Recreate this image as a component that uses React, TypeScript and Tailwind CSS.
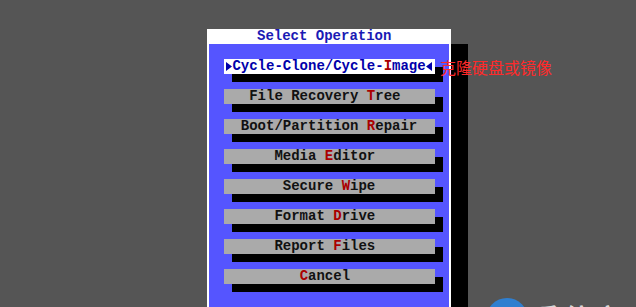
import type { ReactNode } from 'react';

const mono = { fontFamily: "'Liberation Mono', 'DejaVu Sans Mono', monospace" };

type Item = { pad: number; before: string; hot: string; after: string };

const items: Item[] = [
  { pad: 3, before: 'File Recovery ', hot: 'T', after: 'ree' },
  { pad: 2, before: 'Boot/Partition ', hot: 'R', after: 'epair' },
  { pad: 6, before: 'Media ', hot: 'E', after: 'ditor' },
  { pad: 7, before: 'Secure ', hot: 'W', after: 'ipe' },
  { pad: 6, before: 'Format ', hot: 'D', after: 'rive' },
  { pad: 6, before: 'Report ', hot: 'F', after: 'iles' },
  { pad: 9, before: '', hot: 'C', after: 'ancel' },
];

function Arrow({ dir }: { dir: 'left' | 'right' }) {
  return (
    <span className="inline-flex w-[8.4px] h-[15px] items-center justify-center">
      <svg width="7" height="9" viewBox="0 0 7 9">
        {dir === 'right'
          ? <polygon points="1,0 7,4.5 1,9" fill="#0000aa" />
          : <polygon points="6,0 0,4.5 6,9" fill="#0000aa" />}
      </svg>
    </span>
  );
}

function Button({ children, selected }: { children: ReactNode; selected?: boolean }) {
  return (
    <div
      className={`w-[211px] h-[15px] text-[14px] leading-[15px] font-bold whitespace-pre flex items-center shadow-[8px_8px_0_#000] ${
        selected ? 'bg-white text-[#0000aa]' : 'bg-[#aaaaaa] text-[#111111]'
      }`}
      style={mono}
    >
      {children}
    </div>
  );
}

export default function App() {
  return (
    <div className="relative w-[636px] h-[307px] overflow-hidden bg-[#555555]">
      {/* DOS dialog */}
      <div className="ml-[207px] mt-[29px] w-[244px] bg-white shadow-[17px_15px_0_#000]">
        <div
          className="h-[15px] pl-[50px] text-[14px] leading-[15px] font-bold text-[#1a1ab4] whitespace-pre"
          style={mono}
        >
          Select Operation
        </div>
        <div className="mx-[2px] bg-[#5555ff] pl-[15px] pt-[15px] pb-[40px] flex flex-col gap-[15px]">
          <Button selected>
            <Arrow dir="right" />
            <span>Cycle-Clone/Cycle-</span>
            <span className="text-[#aa0000]">I</span>
            <span>mage</span>
            <Arrow dir="left" />
          </Button>
          {items.map((it) => (
            <Button key={it.hot + it.after}>
              <span>{' '.repeat(it.pad) + it.before}</span>
              <span className="text-[#aa0000]">{it.hot}</span>
              <span>{it.after}</span>
            </Button>
          ))}
        </div>
      </div>

      {/* annotation */}
      <div
        className="absolute left-[440px] top-[59px] text-[16px] leading-[16px] text-[#ff2a2a]"
        style={{ fontFamily: "'Noto Sans CJK SC', sans-serif" }}
      >
        克隆硬盘或镜像
      </div>

      {/* watermark */}
      <div className="absolute left-[486px] top-[298px] flex items-start gap-[8px]">
        <div className="w-[50px] h-[50px] rounded-full bg-[#2f7fd0]" />
        <div
          className="mt-[6px] text-[24px] leading-[24px] font-bold text-[#d8d8d8] tracking-[6px]"
          style={{ fontFamily: "'Noto Sans CJK SC', sans-serif" }}
        >
          系统家园
        </div>
      </div>
    </div>
  );
}
